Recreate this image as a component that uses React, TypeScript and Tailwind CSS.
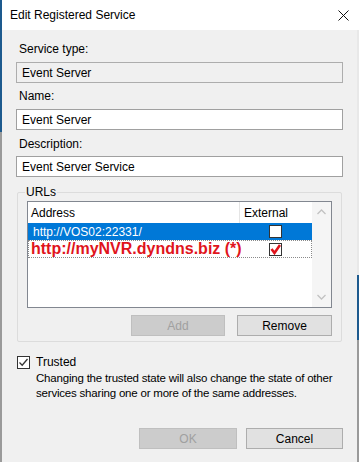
import type { ReactNode } from 'react';

const FONT = 'font-["Liberation_Sans",Arial,sans-serif]';

function Label({ children }: { children: ReactNode }) {
  return <div className="ml-[3px] h-[15px] text-[12px] leading-[15px] text-[#000]">{children}</div>;
}

function TextBox({ value, readOnly }: { value: string; readOnly?: boolean }) {
  return (
    <div
      className={`flex h-[21px] items-center border px-[5px] text-[12px] text-[#000] ${
        readOnly ? 'border-[#adadad] bg-[#f0f0f0]' : 'border-[#a0a0a0] bg-white'
      }`}
    >
      {value}
    </div>
  );
}

function Button({ children, disabled, w }: { children: ReactNode; disabled?: boolean; w: string }) {
  return (
    <button
      type="button"
      className={`flex h-[21px] items-center justify-center border text-[12px] ${w} ${
        disabled ? 'border-[#bfbfbf] bg-[#cccccc] text-[#a0a0a0]' : 'border-[#adadad] bg-[#e1e1e1] text-[#000]'
      }`}
    >
      {children}
    </button>
  );
}

function Box({ checked, red }: { checked?: boolean; red?: boolean }) {
  return (
    <div className="flex h-[13px] w-[13px] shrink-0 items-center justify-center border border-[#333] bg-white">
      {checked && (
        <svg width="11" height="11" viewBox="0 0 11 11">
          {red ? (
            <path d="M1.5 5 L4.5 9 L10 1" fill="none" stroke="#e0141c" strokeWidth="2.6" />
          ) : (
            <path d="M1.5 5.5 L4.2 8.2 L9.5 2" fill="none" stroke="#333" strokeWidth="1.3" />
          )}
        </svg>
      )}
    </div>
  );
}

function Chevron({ up }: { up?: boolean }) {
  return (
    <svg width="9" height="6" viewBox="0 0 9 6">
      <path d={up ? 'M0.5 5 L4.5 1 L8.5 5' : 'M0.5 1 L4.5 5 L8.5 1'} fill="none" stroke="#c2c2c2" strokeWidth="1.3" />
    </svg>
  );
}

export default function App() {
  return (
    <div className={`flex h-[462px] w-[359px] overflow-hidden bg-[#f0f0f0] ${FONT}`}>
      <div className="flex w-[2px] shrink-0 flex-col">
        <div className="h-[132px] bg-[#1d5a8e]" />
        <div className="flex-1 bg-[#9a9a9a]" />
      </div>

      <div className="flex min-w-0 flex-1 flex-col">
        <div className="flex h-[30px] shrink-0 items-center justify-between bg-white pl-[8px] pr-[8px]">
          <span className="text-[12px] text-[#000]">Edit Registered Service</span>
          <svg width="11" height="11" viewBox="0 0 11 11">
            <path d="M0.5 0.5 L10.5 10.5 M10.5 0.5 L0.5 10.5" stroke="#111" strokeWidth="1" />
          </svg>
        </div>

        <div className="flex shrink-0 flex-col px-[14px] pt-[12px]">
          <Label>Service type:</Label>
          <div className="mt-[5px]">
            <TextBox value="Event Server" readOnly />
          </div>
          <div className="mt-[6px]">
            <Label>Name:</Label>
          </div>
          <div className="mt-[5px]">
            <TextBox value="Event Server" />
          </div>
          <div className="mt-[7px]">
            <Label>Description:</Label>
          </div>
          <div className="mt-[4px]">
            <TextBox value="Event Server Service" />
          </div>

          <div className="mx-[1px] mt-[15px] flex flex-col rounded-[2px] border border-[#dcdcdc] px-[9px] pb-[5px]">
            <div className="-mt-[8px] -ml-[2px] w-fit bg-[#f0f0f0] px-[1px] text-[12px] leading-[15px] text-[#000]">URLs</div>
            <div className="mt-[1px] flex h-[107px] border border-[#828790] bg-white">
              <div className="flex min-w-0 flex-1 flex-col">
                <div className="flex h-[21px] text-[12px] text-[#000]">
                  <div className="flex w-[211px] items-center pl-[3px]">Address</div>
                  <div className="flex flex-1 items-center border-l border-[#e5e5e5] pl-[4px]">External</div>
                </div>
                <div className="flex h-[17px] bg-[#0078d7] text-[12px] text-white">
                  <div className="flex w-[211px] items-center pl-[5px]">http://VOS02:22331/</div>
                  <div className="flex flex-1 items-center justify-center">
                    <Box />
                  </div>
                </div>
                <div className="flex h-[18px] border border-dotted border-[#8a8a8a]">
                  <div className="flex w-[210px] items-center whitespace-nowrap pl-[2px] text-[16px] font-bold leading-none text-[#e0141c]">
                    http://myNVR.dyndns.biz (*)
                  </div>
                  <div className="flex flex-1 items-center justify-center">
                    <Box checked red />
                  </div>
                </div>
              </div>
              <div className="flex w-[19px] flex-col items-center justify-between bg-[#f5f5f5] py-[7px]">
                <Chevron up />
                <Chevron />
              </div>
            </div>
            <div className="mt-[7px] flex justify-end gap-[12px]">
              <Button disabled w="w-[94px]">
                Add
              </Button>
              <Button w="w-[95px]">Remove</Button>
            </div>
          </div>

          <div className="mt-[13px] flex items-center gap-[6px] pl-[1px]">
            <Box checked />
            <span className="text-[12px] leading-[15px] text-[#000]">Trusted</span>
          </div>
          <div className="mt-[1px] whitespace-nowrap pl-[20px] text-[11.5px] leading-[15px] tracking-[-0.2px] text-[#000]">
            Changing the trusted state will also change the state of other
            <br />
            services sharing one or more of the same addresses.
          </div>

          <div className="mt-[27px] flex justify-end gap-[9px]">
            <Button disabled w="w-[98px]">
              OK
            </Button>
            <Button w="w-[97px]">Cancel</Button>
          </div>
        </div>
      </div>

      <div className="flex w-[2px] shrink-0 flex-col">
        <div className="h-[30px] bg-white" />
        <div className="h-[245px] bg-[#e8e8e8]" />
        <div className="h-[65px] bg-[#1d5a8e]" />
        <div className="flex-1 bg-[#9a9a9a]" />
      </div>
    </div>
  );
}
